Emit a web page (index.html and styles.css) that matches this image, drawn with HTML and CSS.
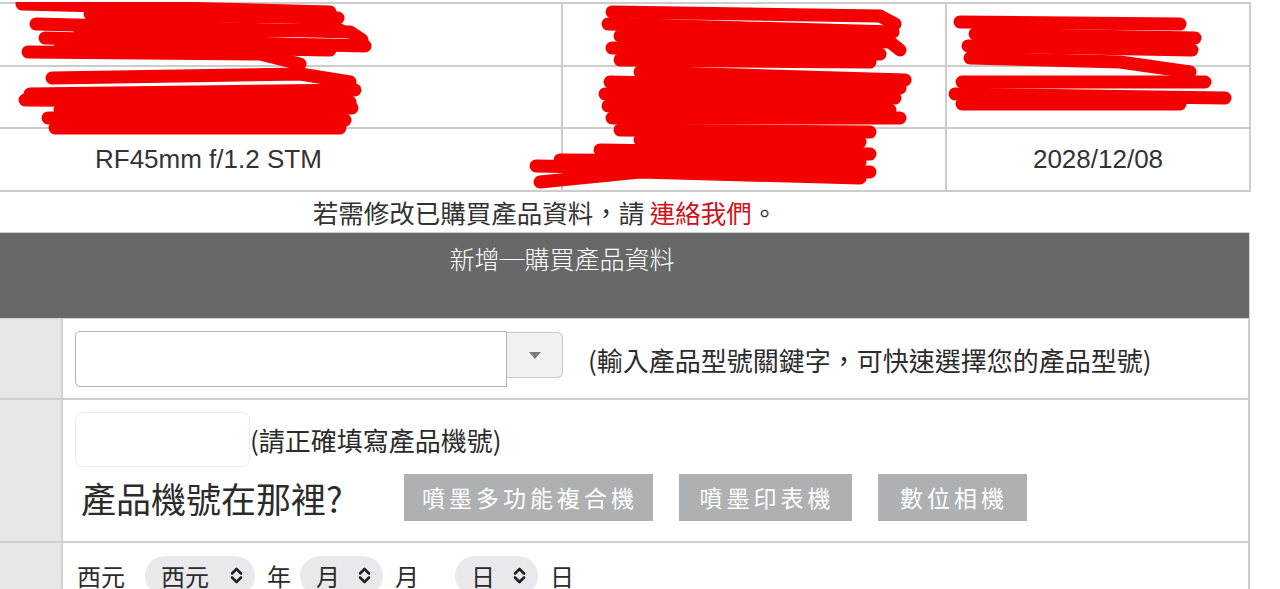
FILE: index.html
```html
<!DOCTYPE html>
<html lang="zh-Hant">
<head>
<meta charset="utf-8">
<title>購買產品資料</title>
<link rel="stylesheet" href="styles.css">
</head>
<body>
<div class="page">
  <div class="records">
    <table class="products">
      <colgroup>
        <col class="col-model">
        <col class="col-serial">
        <col class="col-date">
      </colgroup>
      <tr>
        <td class="c1"></td>
        <td class="c2"></td>
        <td class="c3"></td>
      </tr>
      <tr>
        <td class="c1"></td>
        <td class="c2"></td>
        <td class="c3"></td>
      </tr>
      <tr>
        <td class="c1">RF45mm f/1.2 STM</td>
        <td class="c2"></td>
        <td class="c3">2028/12/08</td>
      </tr>
    </table>
    <svg class="redact" width="1280" height="192" viewBox="0 0 1280 192" aria-hidden="true">
      <g fill="none" stroke="#f50000" stroke-width="13" stroke-linecap="round" stroke-linejoin="round">
        <path d="M22 2 L330 10"/>
        <path d="M90 12 L338 16"/>
        <path d="M36 22 L350 30 L362 38"/>
        <path d="M45 36 L365 44"/>
        <path d="M28 50 L260 52 L300 62"/>
        <path d="M60 44 L330 48"/>
        <path d="M80 30 L340 28"/>
        <path d="M52 76 L300 72 L350 80"/>
        <path d="M30 92 L355 88"/>
        <path d="M25 98 L350 100"/>
        <path d="M60 108 L352 106"/>
        <path d="M48 116 L345 118"/>
        <path d="M55 126 L340 126"/>
        <path d="M612 10 L880 14 L895 22"/>
        <path d="M608 22 L893 30"/>
        <path d="M620 34 L890 40 L900 48"/>
        <path d="M612 46 L880 52"/>
        <path d="M620 58 L870 60"/>
        <path d="M640 70 L905 78"/>
        <path d="M610 80 L900 86"/>
        <path d="M605 92 L895 96"/>
        <path d="M608 104 L890 108"/>
        <path d="M612 116 L900 116"/>
        <path d="M620 128 L870 130"/>
        <path d="M640 138 L860 140"/>
        <path d="M600 148 L870 152"/>
        <path d="M560 158 L860 160"/>
        <path d="M536 164 L870 170"/>
        <path d="M540 180 L640 170 L860 176"/>
        <path d="M960 20 L1180 22"/>
        <path d="M975 32 L1195 36"/>
        <path d="M968 44 L1192 48"/>
        <path d="M970 56 L1120 60 L1190 70"/>
        <path d="M962 80 L1205 80"/>
        <path d="M955 92 L1225 96"/>
        <path d="M962 102 L1180 102"/>
      </g>
    </svg>
  </div>

  <p class="note">若需修改已購買產品資料，請 <a class="contact" href="#">連絡我們</a>。</p>

  <div class="form-head">新增─購買產品資料</div>

  <div class="form">
    <div class="form-row">
      <div class="label"></div>
      <div class="field field-model">
        <div class="combo">
          <input class="combo-input" type="text">
          <span class="combo-btn"><svg width="12" height="7" viewBox="0 0 12 7"><path d="M0 0 H12 L6 7 Z" fill="#7a7a7a"/></svg></span>
        </div>
        <span class="hint">(輸入產品型號關鍵字，可快速選擇您的產品型號)</span>
      </div>
    </div>

    <div class="form-row">
      <div class="label"></div>
      <div class="field field-serial">
        <div class="serial-line">
          <input class="serial-input" type="text">
          <span class="hint">(請正確填寫產品機號)</span>
        </div>
        <div class="where-line">
          <span class="where">產品機號在那裡?</span>
          <span class="btn btn-mfp">噴墨多功能複合機</span>
          <span class="btn btn-ink">噴墨印表機</span>
          <span class="btn btn-cam">數位相機</span>
        </div>
      </div>
    </div>

    <div class="form-row">
      <div class="label"></div>
      <div class="field field-date">
        <span class="dtxt">西元</span>
        <span class="pill pill-era">西元<svg class="chev" width="13" height="17" viewBox="0 0 13 17"><path d="M2 6.5 L6.5 2 L11 6.5 M2 10.5 L6.5 15 L11 10.5" fill="none" stroke="#222" stroke-width="2.6" stroke-linecap="round" stroke-linejoin="round"/></svg></span>
        <span class="dtxt">年</span>
        <span class="pill pill-month">月<svg class="chev" width="13" height="17" viewBox="0 0 13 17"><path d="M2 6.5 L6.5 2 L11 6.5 M2 10.5 L6.5 15 L11 10.5" fill="none" stroke="#222" stroke-width="2.6" stroke-linecap="round" stroke-linejoin="round"/></svg></span>
        <span class="dtxt">月</span>
        <span class="pill pill-day">日<svg class="chev" width="13" height="17" viewBox="0 0 13 17"><path d="M2 6.5 L6.5 2 L11 6.5 M2 10.5 L6.5 15 L11 10.5" fill="none" stroke="#222" stroke-width="2.6" stroke-linecap="round" stroke-linejoin="round"/></svg></span>
        <span class="dtxt">日</span>
      </div>
    </div>
  </div>
</div>
</body>
</html>
```

FILE: styles.css
```css
html, body {
  margin: 0;
  padding: 0;
  background: #ffffff;
}

body {
  font-family: "Liberation Sans", "Noto Sans CJK TC", sans-serif;
  color: #2b2b2b;
  overflow: hidden;
}

.page {
  width: 1250px;
  padding-top: 2px;
}

.records {
  position: relative;
}

.products {
  width: 1250px;
  border-collapse: collapse;
  table-layout: fixed;
}

.col-model {
  width: 562px;
}

.col-serial {
  width: 384px;
}

.col-date {
  width: 304px;
}

.products td {
  height: 62.5px;
  box-sizing: border-box;
  border: 2px solid #cccccc;
  font-size: 26px;
  color: #333333;
  padding: 0;
  vertical-align: middle;
  white-space: nowrap;
  overflow: hidden;
}

.products td.c1 {
  border-left: none;
  padding-left: 95px;
  text-align: left;
}

.products td.c2,
.products td.c3 {
  text-align: center;
}

.redact {
  position: absolute;
  left: 0;
  top: 0;
  pointer-events: none;
}

.note {
  margin: 0;
  height: 40px;
  line-height: 40px;
  text-align: center;
  padding-right: 160px;
  font-family: "Noto Sans CJK TC", sans-serif;
  font-size: 25.5px;
  color: #333333;
  border-bottom: 1px solid #cfcfcf;
}

.contact {
  color: #d0121b;
  text-decoration: none;
}

.form-head {
  height: 86px;
  background: #686868;
  color: #ffffff;
  font-family: "Noto Sans CJK TC", sans-serif;
  font-size: 25px;
  font-weight: 300;
  line-height: 30px;
  padding-top: 10px;
  box-sizing: border-box;
  text-align: center;
  padding-right: 125px;
  border-right: 1px solid #d4d4d4;
  border-bottom: 1px solid #d4d4d4;
}

.form {
  border-right: 2px solid #cccccc;
}

.form-row {
  display: flex;
  border-bottom: 2px solid #cfcfcf;
}

.label {
  width: 61px;
  flex: none;
  background: #e6e6e6;
  border-right: 2px solid #d2d2d2;
}

.field {
  flex: 1;
  padding-left: 12px;
  font-family: "Noto Sans CJK TC", sans-serif;
  font-size: 26px;
  color: #2b2b2b;
}

.field-model {
  display: flex;
  align-items: center;
  height: 79px;
  padding-top: 2px;
  box-sizing: border-box;
}

.combo {
  display: flex;
  align-items: center;
}

.combo-input {
  width: 432px;
  height: 56px;
  box-sizing: border-box;
  border: 1.5px solid #b3b3b3;
  border-radius: 5px 0 0 5px;
  background: #ffffff;
  margin: 0;
  padding: 0;
}

.combo-btn {
  width: 56px;
  height: 46px;
  box-sizing: border-box;
  background: #f2f2f2;
  border: 1.5px solid #c8c8c8;
  border-left: none;
  border-radius: 0 6px 6px 0;
  display: flex;
  align-items: center;
  justify-content: center;
  margin-top: -8px;
}

.hint {
  margin-left: 25px;
  white-space: nowrap;
}

.field-serial {
  padding-top: 12px;
  padding-bottom: 18px;
}

.serial-line {
  display: flex;
  align-items: center;
}

.serial-input {
  width: 175px;
  height: 55px;
  box-sizing: border-box;
  border: 1px solid #ececec;
  border-radius: 8px;
  background: #ffffff;
  margin: 0;
  padding: 0;
}

.serial-line .hint {
  margin-left: 0;
}

.where-line {
  display: flex;
  align-items: center;
  margin-top: 5px;
  padding-left: 6px;
}

.where {
  font-size: 35px;
  color: #2b2b2b;
  margin-right: 61px;
  white-space: nowrap;
}

.btn {
  height: 47px;
  line-height: 47px;
  background: #aeb0b1;
  color: #ffffff;
  font-size: 23px;
  letter-spacing: 4px;
  text-indent: 4px;
  text-align: center;
  margin-right: 26px;
  white-space: nowrap;
  flex: none;
}

.btn-mfp {
  width: 249px;
}

.btn-ink {
  width: 173px;
}

.btn-cam {
  width: 149px;
}

.field-date {
  display: flex;
  align-items: center;
  height: 40px;
  padding-top: 13px;
  padding-bottom: 8px;
  font-size: 24px;
}

.dtxt {
  white-space: nowrap;
}

.field-date .dtxt:first-child {
  margin-left: 2px;
}

.pill {
  display: inline-flex;
  align-items: center;
  height: 40px;
  background: #e9e9eb;
  border-radius: 20px;
  padding: 0 12px 0 16px;
  margin-right: 12px;
  white-space: nowrap;
}

.chev {
  margin-left: 18px;
}

.pill-era {
  margin-left: 20px;
}

.pill-era .chev {
  margin-left: 21px;
}

.pill-month {
  margin-left: 9px;
}

.pill-day {
  margin-left: 36px;
}
```
